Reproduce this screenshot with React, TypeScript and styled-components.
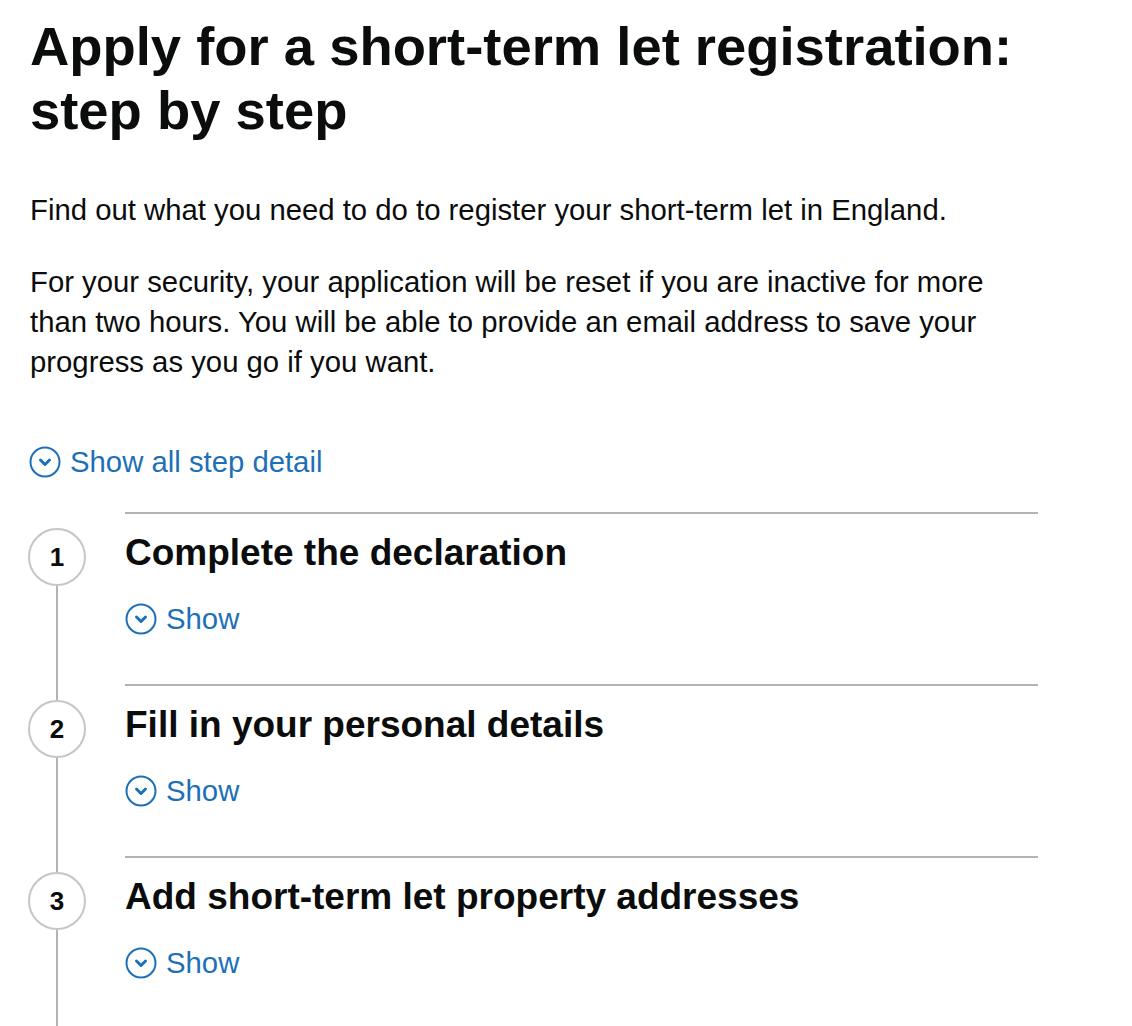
import React from "react";
import styled, { createGlobalStyle } from "styled-components";

const Global = createGlobalStyle`
  html, body { margin: 0; padding: 0; background: #ffffff; }
  body {
    font-family: "Liberation Sans", Arial, sans-serif;
    color: #0b0c0c;
    -webkit-font-smoothing: antialiased;
  }
`;

const Page = styled.main`
  width: 1008px;
  padding: 15px 0 0 30px;
  box-sizing: content-box;
`;

const Title = styled.h1`
  margin: 0 0 47px;
  font-size: 54.4px;
  line-height: 64px;
  font-weight: 700;
  letter-spacing: 0;
`;

const Para = styled.p<{ $last?: boolean }>`
  margin: 0 0 ${(p) => (p.$last ? "0" : "32px")};
  font-size: 29.3px;
  line-height: 40px;
`;

const ShowAll = styled.button`
  display: flex;
  align-items: center;
  gap: 9px;
  margin: 60px 0 30px -1px;
  padding: 0;
  border: 0;
  background: none;
  font-family: inherit;
  font-size: 29.3px;
  line-height: 40px;
  color: #1d70b8;
  cursor: pointer;
`;

const ShowToggle = styled(ShowAll)`
  margin: 24px 0 0;
`;

const StepList = styled.ol`
  list-style: none;
  margin: 0;
  padding: 0;
`;

const Step = styled.li`
  display: flex;
  align-items: stretch;
`;

const Rail = styled.div`
  width: 54px;
  margin-right: 41px;
  display: flex;
  flex-direction: column;
  align-items: center;
`;

const Segment = styled.div<{ $hidden?: boolean; $grow?: boolean }>`
  width: 2px;
  background: ${(p) => (p.$hidden ? "transparent" : "#b1b4b6")};
  flex: ${(p) => (p.$grow ? "1 1 auto" : "0 0 16px")};
`;

const Circle = styled.div`
  flex: 0 0 auto;
  width: 58px;
  height: 58px;
  box-sizing: border-box;
  border: 2px solid #c4c6c8;
  border-radius: 50%;
  background: #ffffff;
  display: flex;
  align-items: center;
  justify-content: center;
  font-size: 26px;
  font-weight: 700;
  line-height: 1;
`;

const Body = styled.div`
  flex: 1;
  border-top: 2px solid #b1b4b6;
  padding: 17px 0 45px;
`;

const StepHeading = styled.h2`
  margin: 0;
  font-size: 37px;
  line-height: 44px;
  font-weight: 700;
`;

const ChevronCircle = () => (
  <svg width="32" height="32" viewBox="0 0 32 32" aria-hidden="true">
    <circle cx="16" cy="16" r="14.5" fill="none" stroke="#1d70b8" strokeWidth="2" />
    <path
      d="M11.5 14 L16 18.5 L20.5 14"
      fill="none"
      stroke="#1d70b8"
      strokeWidth="3"
      strokeLinecap="round"
      strokeLinejoin="round"
    />
  </svg>
);

const steps = [
  "Complete the declaration",
  "Fill in your personal details",
  "Add short-term let property addresses",
];

export default function App() {
  return (
    <>
      <Global />
      <Page>
        <Title>Apply for a short-term let registration: step by step</Title>
        <Para>Find out what you need to do to register your short-term let in England.</Para>
        <Para $last>
          For your security, your application will be reset if you are inactive for more than two
          hours. You will be able to provide an email address to save your progress as you go if
          you want.
        </Para>
        <ShowAll type="button">
          <ChevronCircle />
          Show all step detail
        </ShowAll>
        <StepList>
          {steps.map((s, i) => (
            <Step key={s}>
              <Rail>
                <Segment $hidden={i === 0} />
                <Circle>{i + 1}</Circle>
                <Segment $grow />
              </Rail>
              <Body>
                <StepHeading>{s}</StepHeading>
                <ShowToggle type="button">
                  <ChevronCircle />
                  Show
                </ShowToggle>
              </Body>
            </Step>
          ))}
        </StepList>
      </Page>
    </>
  );
}
